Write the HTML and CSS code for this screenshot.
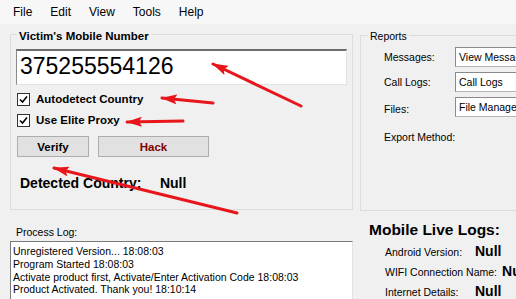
FILE: index.html
```html
<!DOCTYPE html>
<html lang="en">
<head>
  <meta charset="UTF-8">
  <title>Mobile Hack Tool</title>
  <link rel="stylesheet" href="styles.css">
</head>
<body>

  <!-- Menu -->
  <div class="menubar">
    <span>File</span>
    <span>Edit</span>
    <span>View</span>
    <span>Tools</span>
    <span>Help</span>
  </div>

  <div class="main">

    <!-- Left side -->
    <div class="left">
      <div class="group victim">
        <div class="legend bold">Victim's Mobile Number</div>
        <div class="phone">375255554126</div>

        <label class="check">
          <span class="box"><svg width="11" height="11" viewBox="0 0 11 11"><polyline points="2,5.5 4.5,8 9,2.5" fill="none" stroke="#000" stroke-width="1.6"/></svg></span>
          <span class="check-text">Autodetect Country</span>
        </label>
        <label class="check">
          <span class="box"><svg width="11" height="11" viewBox="0 0 11 11"><polyline points="2,5.5 4.5,8 9,2.5" fill="none" stroke="#000" stroke-width="1.6"/></svg></span>
          <span class="check-text">Use Elite Proxy</span>
        </label>

        <div class="buttons">
          <button class="btn verify">Verify</button>
          <button class="btn hack">Hack</button>
        </div>

        <div class="detected">
          <span class="detected-label">Detected Country:</span>
          <span>Null</span>
        </div>
      </div>

      <div class="log-label">Process Log:</div>
      <div class="log">
        <div>Unregistered Version... 18:08:03</div>
        <div>Program Started 18:08:03</div>
        <div>Activate product first, Activate/Enter Activation Code 18:08:03</div>
        <div>Product Activated. Thank you! 18:10:14</div>
      </div>
    </div>

    <!-- Right side -->
    <div class="right">
      <div class="group reports">
        <div class="legend">Reports</div>
        <div class="row first">
          <span class="row-label">Messages:</span>
          <span class="combo">View Messages</span>
        </div>
        <div class="row">
          <span class="row-label">Call Logs:</span>
          <span class="combo">Call Logs</span>
        </div>
        <div class="row">
          <span class="row-label low">Files:</span>
          <span class="combo">File Manager</span>
        </div>
        <div class="export">Export Method:</div>
      </div>

      <div class="live-title">Mobile Live Logs:</div>
      <div class="live-row first">
        <span class="live-label">Android Version:</span>
        <span class="live-value">Null</span>
      </div>
      <div class="live-row">
        <span class="live-label">WIFI Connection Name:</span>
        <span class="live-value">Null</span>
      </div>
      <div class="live-row">
        <span class="live-label">Internet Details:</span>
        <span class="live-value">Null</span>
      </div>
    </div>
  </div>

  <!-- red annotation arrows -->
  <svg class="arrows" width="516" height="299" viewBox="0 0 516 299">
    <defs>
      <marker id="head" markerUnits="userSpaceOnUse" markerWidth="16" markerHeight="10" refX="15" refY="5" orient="auto-start-reverse">
        <path d="M0,0 L16,5 L0,10 L3,5 z" fill="#e8151b"/>
      </marker>
    </defs>
    <g stroke="#e8151b" stroke-width="3" stroke-linecap="round">
      <line x1="213" y1="64" x2="301" y2="106" marker-start="url(#head)"/>
      <line x1="162" y1="98" x2="213" y2="103" marker-start="url(#head)"/>
      <line x1="127" y1="122" x2="183" y2="121" marker-start="url(#head)"/>
      <line x1="54" y1="168" x2="237" y2="213" marker-start="url(#head)"/>
    </g>
  </svg>

</body>
</html>
```

FILE: styles.css
```css
* {
  margin: 0;
  padding: 0;
  box-sizing: border-box;
}

body {
  font-family: 'Liberation Sans', Arial, sans-serif;
  font-size: 10.5px;
  color: #000;
  background-color: #f0f0f0;
  width: 516px;
  height: 299px;
  overflow: hidden;
  position: relative;
}

.bold {
  font-weight: bold;
}

/* Menu */
.menubar {
  height: 24px;
  padding-left: 4px;
  display: flex;
  background-color: #f7f7f7;
  font-size: 12px;
  line-height: 24px;
}

.menubar span {
  padding: 0 9px;
}

.main {
  display: flex;
}

/* Group boxes */
.group {
  border: 1px solid #dcdcdc;
}

.legend {
  width: fit-content;
  background-color: #f0f0f0;
  padding: 0 2px;
}

/* Left column */
.left {
  width: 345px;
  margin-left: 10px;
}

.victim {
  margin-top: 10px;
  height: 176px;
  padding: 0 5px;
}

.victim .legend {
  font-size: 11.5px;
  line-height: 14px;
  margin-top: -6px;
  margin-left: 1px;
}

.phone {
  margin-top: 6px;
  height: 36px;
  background-color: #fff;
  border: 1px solid #e3e3e3;
  border-top: 2px solid #6d6d6d;
  border-left-color: #8a8a8a;
  font-size: 23px;
  line-height: 31px;
  padding-left: 3px;
}

.check {
  display: flex;
  align-items: center;
  height: 21px;
  margin-left: 1px;
  font-size: 11.5px;
  font-weight: bold;
}

.check:first-of-type {
  margin-top: 4px;
}

.box {
  width: 13px;
  height: 13px;
  border: 1px solid #333;
  background-color: #fff;
  display: flex;
  align-items: center;
  justify-content: center;
  margin-right: 6px;
}

.check-text {
  padding-bottom: 2px;
}

.buttons {
  display: flex;
  gap: 9px;
  margin-top: 5px;
  margin-left: 1px;
}

.btn {
  height: 21px;
  font-family: inherit;
  font-size: 11.5px;
  font-weight: bold;
  background-color: #e1e1e1;
  border: 1px solid #adadad;
  color: #000;
}

.verify {
  width: 72px;
}

.hack {
  width: 111px;
  color: #800000;
}

.detected {
  margin-top: 17px;
  padding-left: 4px;
  font-size: 14px;
  line-height: 18px;
  font-weight: bold;
}

.detected-label {
  display: inline-block;
  width: 136px;
}

.log-label {
  margin-top: 16px;
  margin-left: 6px;
  line-height: 13px;
}

.log {
  margin-top: 2px;
  width: 343px;
  height: 70px;
  background-color: #fff;
  border: 1px solid #e3e3e3;
  border-top-color: #7a7a7a;
  border-left-color: #7a7a7a;
  padding: 3px 0 0 2px;
  line-height: 12.75px;
  white-space: nowrap;
  overflow: hidden;
}

/* Right column */
.right {
  margin-left: 7px;
  width: 220px;
}

.reports {
  margin-top: 11px;
  height: 176px;
  padding-left: 23px;
  border-right: none;
}

.reports .legend {
  line-height: 13px;
  margin-top: -6px;
  margin-left: -16px;
}

.row {
  display: flex;
  height: 20px;
  margin-top: 5px;
}

.row.first {
  margin-top: 4px;
}

.row-label {
  width: 71px;
  line-height: 13px;
  padding-top: 4px;
}

.row-label.low {
  padding-top: 6px;
}

.combo {
  width: 110px;
  background-color: #fff;
  border: 1px solid #b4b4b4;
  border-top-color: #8a8a8a;
  border-left-color: #8a8a8a;
  padding-left: 3px;
  line-height: 18px;
  white-space: nowrap;
}

.export {
  margin-top: 14px;
  line-height: 13px;
}

.live-title {
  margin-top: 10px;
  margin-left: 9px;
  font-size: 15.5px;
  font-weight: bold;
  line-height: 18px;
}

.live-row {
  display: flex;
  align-items: baseline;
  height: 20px;
  margin-left: 25px;
  white-space: nowrap;
}

.live-row.first {
  margin-top: 4px;
}

.live-label {
  min-width: 90px;
  padding-right: 5px;
}

.live-value {
  font-size: 14px;
  font-weight: bold;
}

/* Annotation arrows */
.arrows {
  position: absolute;
  top: 0;
  left: 0;
  pointer-events: none;
}
```
